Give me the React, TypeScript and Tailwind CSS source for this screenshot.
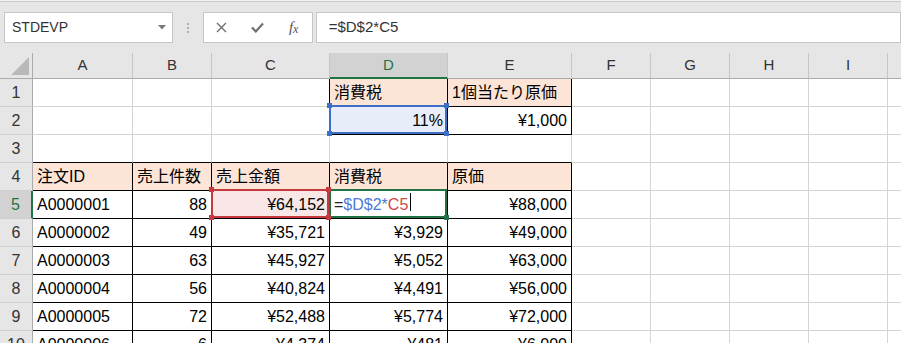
import React from 'react'

type Mark = 'blue' | 'red' | 'green'

type Cell = {
  t?: React.ReactNode
  right?: boolean
  bg?: string
  br?: boolean
  bb?: boolean
  mark?: Mark
}

const COLS = ['A', 'B', 'C', 'D', 'E', 'F', 'G', 'H', 'I', 'J']
const WIDTHS = [
  'w-[100px]',
  'w-[79px]',
  'w-[118px]',
  'w-[118px]',
  'w-[124px]',
  'w-[79px]',
  'w-[79px]',
  'w-[79px]',
  'w-[79px]',
  'w-[79px]',
]

const PEACH = 'bg-[#fce4d6]'

const head = (t: string): Cell => ({ t, bg: PEACH, br: true, bb: true })
const num = (t: string): Cell => ({ t, right: true, br: true, bb: true })

const formula = (
  <>
    <span className="text-[#222]">=</span>
    <span className="text-[#4f78d8]">$D$2*</span>
    <span className="text-[#d0474a]">C5</span>
    <span className="ml-[2px] inline-block h-[18px] w-[1px] self-start bg-black" />
  </>
)

const data: [string, string, string, string, string][] = [
  ['A0000001', '88', '¥64,152', '', '¥88,000'],
  ['A0000002', '49', '¥35,721', '¥3,929', '¥49,000'],
  ['A0000003', '63', '¥45,927', '¥5,052', '¥63,000'],
  ['A0000004', '56', '¥40,824', '¥4,491', '¥56,000'],
  ['A0000005', '72', '¥52,488', '¥5,774', '¥72,000'],
  ['A0000006', '6', '¥4,374', '¥481', '¥6,000'],
]

const rows: Cell[][] = [
  [{}, {}, { br: true }, { t: '消費税', bg: PEACH, br: true, bb: true }, { t: '1個当たり原価', bg: PEACH, br: true, bb: true }],
  [{}, {}, { br: true }, { t: '11%', right: true, bg: 'bg-[#e7eef9]', br: true, bb: true, mark: 'blue' }, num('¥1,000')],
  [{ bb: true }, { bb: true }, { bb: true }, { bb: true }, { bb: true }],
  [head('注文ID'), head('売上件数'), head('売上金額'), head('消費税'), head('原価')],
  ...data.map((d, i) => [
    { t: d[0], br: true, bb: true },
    num(d[1]),
    i === 0 ? { ...num(d[2]), bg: 'bg-[#f9e7e7]', mark: 'red' as Mark } : num(d[2]),
    i === 0 ? { t: formula, br: true, bb: true, mark: 'green' as Mark } : num(d[3]),
    num(d[4]),
  ]),
]

const Handle = ({ pos, color }: { pos: string; color: string }) => (
  <span className={`absolute z-20 h-[5px] w-[5px] ${pos} ${color}`} />
)

const Outline = ({ kind }: { kind: Mark }) => {
  const border =
    kind === 'blue' ? 'border-[#3d6fc6]' : kind === 'red' ? 'border-[#c43a3f]' : 'border-[#217346]'
  const fill = kind === 'blue' ? 'bg-[#3d6fc6]' : kind === 'red' ? 'bg-[#c43a3f]' : 'bg-[#217346]'
  return (
    <>
      <span className={`pointer-events-none absolute -top-[2px] -left-[1px] right-0 bottom-0 z-10 border-2 ${border}`} />
      {kind !== 'green' && (
        <>
          <Handle pos="-top-[4px] -left-[3px]" color={fill} />
          <Handle pos="-top-[4px] -right-[2px]" color={fill} />
          <Handle pos="-bottom-[2px] -left-[3px]" color={fill} />
        </>
      )}
      <Handle pos="-bottom-[2px] -right-[2px]" color={fill} />
    </>
  )
}

const SheetCell = ({ c, w }: { c: Cell; w: string }) => (
  <div
    className={`relative flex h-full shrink-0 items-center border-r border-b px-[4px] ${w} ${
      c.br ? 'border-r-black' : 'border-r-[#d4d4d4]'
    } ${c.bb ? 'border-b-black' : 'border-b-[#d4d4d4]'} ${c.right ? 'justify-end' : 'justify-start'} ${c.bg ?? ''}`}
  >
    {c.t !== undefined && <span className="flex items-center whitespace-nowrap">{c.t}</span>}
    {c.mark && <Outline kind={c.mark} />}
  </div>
)

const Toolbar = () => (
  <div className="h-[53px] shrink-0 bg-[#e6e6e6]">
    <div className="h-[1px] bg-[#f2f2f2]" />
    <div className="h-[1px] bg-[#c8c8c8]" />
    <div className="flex items-start pl-[4px] pt-[10px]">
      <div className="flex h-[31px] w-[178px] items-center justify-between border border-[#c6c6c6] bg-white pr-[6px] pl-[7px] text-[14px] text-[#333]">
        <span>STDEVP</span>
        <svg width="8" height="5" viewBox="0 0 8 5">
          <path d="M0 0 H8 L4 4.5 Z" fill="#7a7a7a" />
        </svg>
      </div>
      <div className="ml-[14px] flex h-[31px] flex-col items-center justify-center gap-[2px]">
        <span className="h-[2px] w-[2px] bg-[#b0b0b0]" />
        <span className="h-[2px] w-[2px] bg-[#b0b0b0]" />
        <span className="h-[2px] w-[2px] bg-[#b0b0b0]" />
      </div>
      <div className="ml-[14px] flex h-[31px] w-[110px] items-center border border-[#c6c6c6] bg-white">
        <div className="flex w-[36px] items-center justify-center">
          <svg width="11" height="11" viewBox="0 0 11 11">
            <path d="M1 1 L10 10 M10 1 L1 10" stroke="#6e6e6e" strokeWidth="1.4" />
          </svg>
        </div>
        <div className="flex w-[36px] items-center justify-center">
          <svg width="13" height="11" viewBox="0 0 13 11">
            <path d="M1 5.5 L4.8 9.5 L12 1.5" stroke="#707070" strokeWidth="2.2" fill="none" />
          </svg>
        </div>
        <div className="flex w-[36px] items-center justify-center font-['Liberation_Serif',serif] text-[15px] text-[#555] italic">
          <span>f</span>
          <span className="mt-[3px] text-[12px]">x</span>
        </div>
      </div>
      <div className="ml-[3px] flex h-[31px] w-[620px] items-center border border-[#c6c6c6] bg-white pl-[12px] text-[15px] text-[#333]">
        =$D$2*C5
      </div>
    </div>
  </div>
)

const App: React.FC = () => {
  return (
    <div className="flex h-[343px] w-[901px] flex-col overflow-hidden bg-white font-['Liberation_Sans','Noto_Sans_CJK_JP',sans-serif] text-black">
      <Toolbar />
      {/* column headers */}
      <div className="flex h-[26px] shrink-0 bg-[#e6e6e6]">
        <div className="relative h-full w-[33px] shrink-0 border-r border-b border-r-[#ababab] border-b-[#ababab]">
          <svg className="absolute top-[4px] left-[11px]" width="18" height="18" viewBox="0 0 18 18">
            <path d="M18 0 V18 H0 Z" fill="#b9b9b9" />
          </svg>
        </div>
        {COLS.map((c, i) => (
          <div
            key={c}
            className={`flex h-full shrink-0 items-center justify-center border-r border-r-[#c6c6c6] text-[15px] ${WIDTHS[i]} ${
              c === 'D'
                ? 'border-b-2 border-b-[#217346] bg-[#d2d2d2] text-[#217346]'
                : 'border-b border-b-[#ababab] text-[#333]'
            }`}
          >
            {c}
          </div>
        ))}
      </div>
      {/* rows */}
      {Array.from({ length: 10 }).map((_, r) => {
        const cells = rows[r]
        const active = r === 4
        return (
          <div key={r} className="flex h-[28px] shrink-0 text-[16px]">
            <div
              className={`flex h-full w-[33px] shrink-0 items-center justify-center border-b border-b-[#cfcfcf] ${
                active
                  ? 'border-r-2 border-r-[#217346] bg-[#d2d2d2] text-[#217346]'
                  : 'border-r border-r-[#ababab] bg-[#e6e6e6] text-[#333]'
              }`}
            >
              {r + 1}
            </div>
            {COLS.map((_, i) => (
              <SheetCell key={i} c={cells[i] ?? {}} w={WIDTHS[i]} />
            ))}
          </div>
        )
      })}
    </div>
  )
}

export default App
